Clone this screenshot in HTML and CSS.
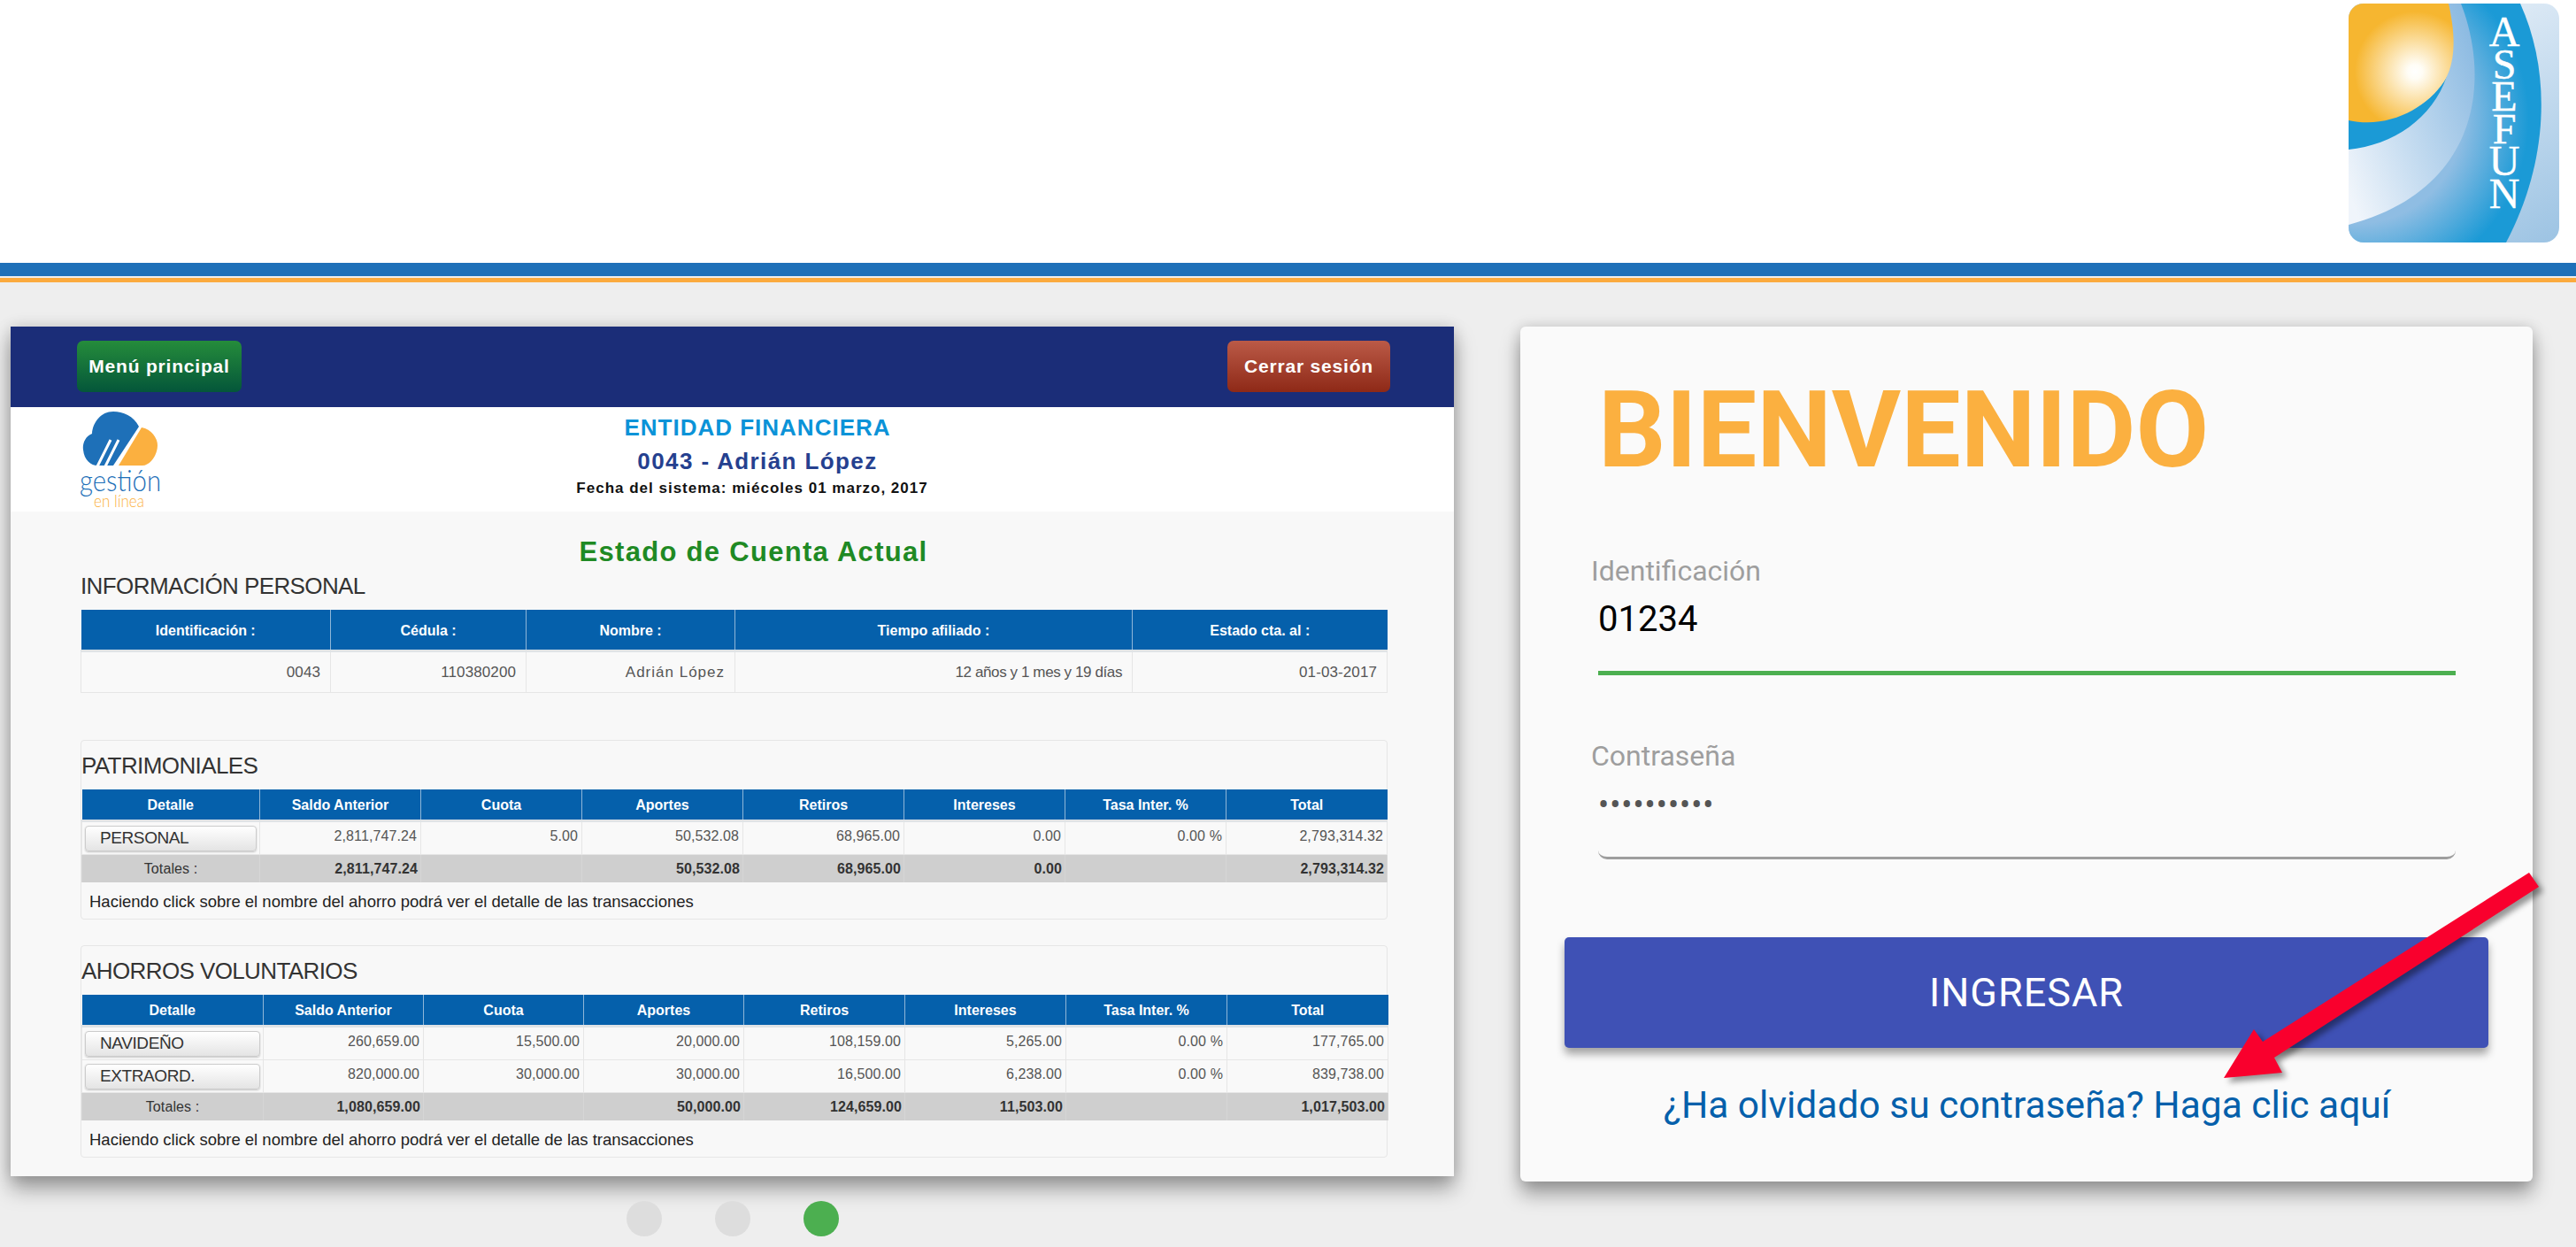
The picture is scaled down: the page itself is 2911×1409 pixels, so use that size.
FILE: index.html
```html
<!DOCTYPE html>
<html lang="es">
<head>
    <meta charset="UTF-8">
    <meta name="viewport" content="width=device-width, initial-scale=1.0">
    <title>Gestión en línea</title>
    <link rel="stylesheet" href="styles.css">
</head>
<body>
    <header class="site-header">
        <svg class="asefun-logo" viewBox="0 0 238 270" role="img" aria-label="ASEFUN">
            <defs>
                <clipPath id="logoClip"><rect width="238" height="270" rx="17"/></clipPath>
                <linearGradient id="logoBack" x1="0.5" y1="0" x2="1" y2="1">
                    <stop offset="0" stop-color="#e6eff8"/>
                    <stop offset="1" stop-color="#9cc3e3"/>
                </linearGradient>
                <radialGradient id="logoBand" gradientUnits="userSpaceOnUse" cx="10" cy="130" r="215">
                    <stop offset="0.55" stop-color="#8fbde3"/>
                    <stop offset="0.9" stop-color="#1b9ad6"/>
                </radialGradient>
                <linearGradient id="logoArc" x1="0" y1="0.85" x2="1" y2="0.2">
                    <stop offset="0" stop-color="#f0f5fb"/>
                    <stop offset="1" stop-color="#8dbbe2"/>
                </linearGradient>
                <radialGradient id="logoSun" gradientUnits="userSpaceOnUse" cx="75" cy="77" r="68">
                    <stop offset="0" stop-color="#ffffff"/>
                    <stop offset="0.12" stop-color="#fffdf6"/>
                    <stop offset="1" stop-color="#f6b630"/>
                </radialGradient>
            </defs>
            <g clip-path="url(#logoClip)">
                <rect width="238" height="270" fill="url(#logoBack)"/>
                <path d="M0 0H194C228 75 228 175 178 270H0Z" fill="url(#logoBand)"/>
                <path d="M0 0H127C160 85 150 210 0 250Z" fill="url(#logoArc)"/>
                <path d="M0 125C45 140 90 120 111 82C95 130 50 160 0 165Z" fill="#1b9ad6"/>
                <path d="M0 0H113C122 40 120 68 108 88C88 118 45 142 0 132Z" fill="url(#logoSun)"/>
                <text class="asefun-letters" x="176" y="5">ASEFUN</text>
            </g>
        </svg>
    </header>
    <div class="line-blue"></div>
    <div class="line-orange"></div>

    <main class="page">
        <div class="slide-col">
            <section class="slide">
                <div class="slide-bar">
                    <a class="btn-top btn-green" href="#">Menú principal</a>
                    <a class="btn-top btn-red" href="#">Cerrar sesión</a>
                </div>
                <div class="slide-head">
                    <svg class="gestion-logo" viewBox="-12 0 114 114" role="img" aria-label="Gestión en línea">
                        <path d="M64 17C58 5 46 0 35 0C21 0 12 12 11 25C3 28 0 37 1 43C2 55 10 61 17 61H35Z" fill="#1e70b8"/>
                        <path d="M32 32L17 62M41 32L26 62" stroke="#fff" stroke-width="3" fill="none"/>
                        <path d="M67 18C78 20 85 30 85 38C85 50 76 61 68 61H41Z" fill="#fbb040"/>
                        <text class="gestion-word" x="-3" y="90" textLength="92" lengthAdjust="spacingAndGlyphs">gestión</text>
                        <text class="gestion-sub" x="13" y="108" textLength="57" lengthAdjust="spacingAndGlyphs">en línea</text>
                    </svg>
                    <div class="slide-titles">
                        <div class="entity">ENTIDAD FINANCIERA</div>
                        <div class="member">0043 - Adrián López</div>
                        <div class="sysdate">Fecha del sistema: miécoles 01 marzo, 2017</div>
                    </div>
                </div>
                <div class="slide-body">
                    <h2 class="state-title">Estado de Cuenta Actual</h2>

                    <h3 class="block-title">INFORMACIÓN PERSONAL</h3>
                    <table class="grid grid-info">
                        <colgroup><col class="i1"><col class="i2"><col class="i3"><col class="i4"><col class="i5"></colgroup>
                        <tr><th>Identificación :</th><th>Cédula :</th><th>Nombre :</th><th>Tiempo afiliado :</th><th>Estado cta. al :</th></tr>
                        <tr>
                            <td>0043</td><td>110380200</td><td class="spaced">Adrián López</td>
                            <td class="tight">12 años y 1 mes y 19 días</td><td>01-03-2017</td>
                        </tr>
                    </table>

                    <div class="panel panel-first">
                        <h3 class="block-title">PATRIMONIALES</h3>
                        <table class="grid grid-money grid-pat">
                            <colgroup><col class="m1"><col class="m2"><col class="m3"><col class="m4"><col class="m5"><col class="m6"><col class="m7"><col class="m8"></colgroup>
                            <tr><th>Detalle</th><th>Saldo Anterior</th><th>Cuota</th><th>Aportes</th><th>Retiros</th><th>Intereses</th><th>Tasa Inter. %</th><th>Total</th></tr>
                            <tr>
                                <td class="cell-btn"><button class="btn-save" type="button">PERSONAL</button></td>
                                <td>2,811,747.24</td><td>5.00</td><td>50,532.08</td><td>68,965.00</td><td>0.00</td><td>0.00 %</td><td>2,793,314.32</td>
                            </tr>
                            <tr class="totals">
                                <td>Totales :</td><td>2,811,747.24</td><td></td><td>50,532.08</td><td>68,965.00</td><td>0.00</td><td></td><td>2,793,314.32</td>
                            </tr>
                        </table>
                        <p class="note">Haciendo click sobre el nombre del ahorro podrá ver el detalle de las transacciones</p>
                    </div>

                    <div class="panel panel-second">
                        <h3 class="block-title">AHORROS VOLUNTARIOS</h3>
                        <table class="grid grid-money grid-aho">
                            <colgroup><col class="m1"><col class="m2"><col class="m3"><col class="m4"><col class="m5"><col class="m6"><col class="m7"><col class="m8"></colgroup>
                            <tr><th>Detalle</th><th>Saldo Anterior</th><th>Cuota</th><th>Aportes</th><th>Retiros</th><th>Intereses</th><th>Tasa Inter. %</th><th>Total</th></tr>
                            <tr>
                                <td class="cell-btn"><button class="btn-save" type="button">NAVIDEÑO</button></td>
                                <td>260,659.00</td><td>15,500.00</td><td>20,000.00</td><td>108,159.00</td><td>5,265.00</td><td>0.00 %</td><td>177,765.00</td>
                            </tr>
                            <tr>
                                <td class="cell-btn"><button class="btn-save" type="button">EXTRAORD.</button></td>
                                <td>820,000.00</td><td>30,000.00</td><td>30,000.00</td><td>16,500.00</td><td>6,238.00</td><td>0.00 %</td><td>839,738.00</td>
                            </tr>
                            <tr class="totals">
                                <td>Totales :</td><td>1,080,659.00</td><td></td><td>50,000.00</td><td>124,659.00</td><td>11,503.00</td><td></td><td>1,017,503.00</td>
                            </tr>
                        </table>
                        <p class="note">Haciendo click sobre el nombre del ahorro podrá ver el detalle de las transacciones</p>
                    </div>
                </div>
            </section>
            <div class="dots">
                <span class="dot"></span>
                <span class="dot"></span>
                <span class="dot dot-on"></span>
            </div>
        </div>

        <section class="login">
            <h1 class="login-title">BIENVENIDO</h1>
            <form class="login-form">
                <label class="field-label" for="user">Identificación</label>
                <input class="field field-active" id="user" type="text" value="01234">
                <label class="field-label field-label-2" for="pass">Contraseña</label>
                <input class="field field-pass" id="pass" type="password" value="1234567890">
                <button class="btn-login" type="button">INGRESAR</button>
            </form>
            <a class="forgot" href="#">¿Ha olvidado su contraseña? Haga clic aquí</a>
            <svg class="arrow" viewBox="0 0 375 250" aria-hidden="true">
                <path d="M353 6L364 22L65 215L74 232L8 238L42 183L52 197Z" fill="#f9002d"/>
            </svg>
        </section>
    </main>
</body>
</html>
```

FILE: styles.css
```css
/* Base */
body {
    margin: 0;
    background: #eeeeee;
    font-family: 'Liberation Sans', Arial, sans-serif;
    color: #333;
    overflow: hidden;
}

/* Header */
.site-header {
    height: 297px;
    box-sizing: border-box;
    background: #fff;
    display: flex;
    justify-content: flex-end;
    padding: 4px 19px 0 0;
}

.asefun-logo {
    width: 238px;
    height: 270px;
}

.asefun-letters {
    font-family: 'Liberation Serif', serif;
    font-size: 48px;
    fill: #fff;
    stroke: #fff;
    stroke-width: 0.4px;
    writing-mode: vertical-rl;
    text-orientation: upright;
    letter-spacing: -16.4px;
}

.line-blue {
    height: 15px;
    background: #1e70b8;
    margin-bottom: 2px;
}

.line-orange {
    height: 5px;
    background: #fbaa3e;
}

/* Layout */
.page {
    display: flex;
    align-items: flex-start;
    gap: 75px;
    padding: 50px 49px 0 12px;
}

.slide-col {
    width: 1631px;
    flex: none;
}

/* Left slide */
.slide {
    height: 960px;
    background: #f8f8f8;
    box-shadow: 0 14px 22px rgba(0, 0, 0, 0.35), 0 0 16px rgba(0, 0, 0, 0.14);
}

.slide-bar {
    height: 91px;
    box-sizing: border-box;
    background: #1b2d78;
    display: flex;
    justify-content: space-between;
    align-items: flex-start;
    padding: 16px 72px 0 75px;
}

.btn-top {
    height: 58px;
    line-height: 58px;
    border-radius: 7px;
    color: #fff;
    font-size: 21px;
    font-weight: bold;
    letter-spacing: 0.8px;
    text-align: center;
    text-decoration: none;
}

.btn-green {
    width: 186px;
    background: linear-gradient(#258c3b, #04563a);
}

.btn-red {
    width: 184px;
    background: linear-gradient(#bb5a47, #8e2917);
}

.slide-head {
    height: 118px;
    background: #fff;
    display: flex;
    padding-left: 69px;
}

.gestion-logo {
    width: 114px;
    height: 114px;
    margin-top: 5px;
    flex: none;
}

.gestion-word {
    font-family: Lato, sans-serif;
    font-weight: 300;
    font-size: 33px;
    fill: #1e70b8;
}

.gestion-sub {
    font-family: Lato, sans-serif;
    font-weight: 300;
    font-size: 20px;
    fill: #fbb040;
}

.slide-titles {
    flex: 1;
    padding-right: 126px;
    text-align: center;
    font-weight: bold;
    letter-spacing: 1px;
}

.entity {
    margin-top: 8px;
    font-size: 26px;
    line-height: 30px;
    color: #0b93d8;
}

.member {
    margin-top: 8px;
    font-size: 26px;
    line-height: 30px;
    letter-spacing: 1.4px;
    color: #25408f;
}

.sysdate {
    margin-top: 5px;
    margin-right: 12px;
    font-size: 17px;
    line-height: 22px;
    color: #111;
}

.slide-body {
    padding: 29px 75px 0 79px;
}

.state-title {
    margin: 0;
    padding-left: 44px;
    text-align: center;
    font-size: 31px;
    line-height: 34px;
    letter-spacing: 1.3px;
    color: #1f8a24;
}

.block-title {
    margin: 0;
    font-size: 26px;
    line-height: 30px;
    font-weight: normal;
    letter-spacing: -0.6px;
    color: #333;
}

.slide-body > .block-title {
    margin-top: 6px;
}

/* Tables */
.grid {
    width: 100%;
    table-layout: fixed;
    border-collapse: collapse;
    margin-top: 12px;
}

.grid th {
    background: #0560ab;
    color: #fff;
    font-weight: bold;
    text-align: center;
    padding: 2px 0 0;
    border-left: 1px solid #8fb6d8;
    border-bottom: 3px solid #dfe3e6;
}

.grid th:first-child {
    border-left: 0;
}

.grid td {
    background: #f9f9f9;
    color: #555;
    text-align: right;
    padding: 0 4px 4px 0;
    letter-spacing: 0.1px;
    border: 1px solid #e6e6e6;
}

.grid-info th {
    height: 43px;
    font-size: 16px;
}

.grid-info td {
    height: 45px;
    font-size: 17px;
    padding-right: 11px;
    padding-bottom: 0;
}

.grid-info .spaced {
    letter-spacing: 1px;
}

.grid-info .tight {
    letter-spacing: -0.4px;
}

.i1 { width: 282px; }
.i2 { width: 221px; }
.i3 { width: 236px; }
.i4 { width: 449px; }
.i5 { width: 288px; }

.grid-money th {
    height: 32px;
    font-size: 16px;
}

.grid-money td {
    height: 32px;
    font-size: 16px;
}

.grid-pat .m1 { width: 201px; }
.grid-aho .m1 { width: 205px; }
.grid-pat .m2, .grid-pat .m3, .grid-pat .m4 { width: 182px; }
.grid-aho .m2, .grid-aho .m3, .grid-aho .m4 { width: 181px; }
.m5 { width: 182px; }
.m6, .m7, .m8 { width: 182px; }

.grid .cell-btn {
    padding: 0 3px;
}

.btn-save {
    display: block;
    width: 100%;
    height: 29px;
    padding: 0 0 0 16px;
    text-align: left;
    font-family: 'Liberation Sans', Arial, sans-serif;
    font-size: 19px;
    letter-spacing: -0.4px;
    color: #333;
    background: linear-gradient(#ffffff, #e4e4e4);
    border: 1px solid #ccc;
    border-radius: 4px;
    box-shadow: 0 1px 2px rgba(0, 0, 0, 0.2);
}

.grid .totals td {
    height: 31px;
    background: #cfcfcf;
    border-color: #d6d6d6;
    border-top: 0;
    border-bottom: 0;
    color: #333;
    font-weight: bold;
    padding: 0 3px 0 0;
}

.grid .totals td:first-child {
    font-weight: normal;
    text-align: center;
    padding: 0;
}

/* Panels */
.panel {
    box-sizing: border-box;
    border: 1px solid #e6e6e6;
    border-radius: 4px;
}

.panel-first {
    height: 203px;
    margin-top: 53px;
    padding-top: 13px;
}

.panel-second {
    height: 240px;
    margin-top: 29px;
    padding-top: 13px;
}

.note {
    margin: 10px 0 0 9px;
    font-size: 18.5px;
    line-height: 24px;
    color: #222;
}

/* Slide dots */
.dots {
    display: flex;
    justify-content: center;
    gap: 60px;
    margin-top: 28px;
}

.dot {
    width: 40px;
    height: 40px;
    border-radius: 50%;
    background: #dddddd;
}

.dot-on {
    background: #4caf50;
}

/* Login */
.login {
    position: relative;
    width: 1144px;
    height: 966px;
    box-sizing: border-box;
    padding: 57px 87px 0 88px;
    background: #fafafa;
    border-radius: 6px;
    box-shadow: 0 14px 22px rgba(0, 0, 0, 0.35), 0 0 16px rgba(0, 0, 0, 0.14);
    font-family: Roboto, sans-serif;
}

.login-title {
    margin: 0;
    font-size: 120px;
    line-height: 120px;
    font-weight: bold;
    color: #fbb040;
}

.login-form {
    display: flex;
    flex-direction: column;
}

.field-label {
    margin: 81px 0 0 -8px;
    font-size: 32px;
    line-height: 36px;
    color: #9e9e9e;
}

.field-label-2 {
    margin-top: 73px;
}

.field {
    width: 100%;
    box-sizing: border-box;
    background: transparent;
    border: 0;
    outline: 0;
    padding: 0;
    font-family: Roboto, sans-serif;
    font-size: 40px;
    color: #000;
}

.field-active {
    height: 100px;
    padding-bottom: 23px;
    border-bottom: 5px solid #4caf50;
}

.field-pass {
    height: 99px;
    padding-bottom: 20px;
    font-size: 36px;
    letter-spacing: 1px;
    color: #555;
    border-bottom: 3px solid #9e9e9e;
    border-radius: 0 0 10px 10px;
}

.btn-login {
    height: 125px;
    margin: 88px -37px 0 -38px;
    background: #3f51b5;
    color: #fff;
    border: 0;
    border-radius: 5px;
    box-shadow: 0 7px 10px rgba(0, 0, 0, 0.35);
    font-family: Roboto, sans-serif;
    font-size: 45px;
    letter-spacing: 1px;
}

.forgot {
    display: block;
    margin-top: 40px;
    text-align: center;
    font-size: 42.5px;
    line-height: 50px;
    color: #0560ab;
    text-decoration: none;
}

/* Red arrow over the form */
.arrow {
    position: absolute;
    left: 787px;
    top: 611px;
    width: 375px;
    height: 250px;
    filter: drop-shadow(5px 5px 3px rgba(0, 0, 0, 0.4));
}
```
